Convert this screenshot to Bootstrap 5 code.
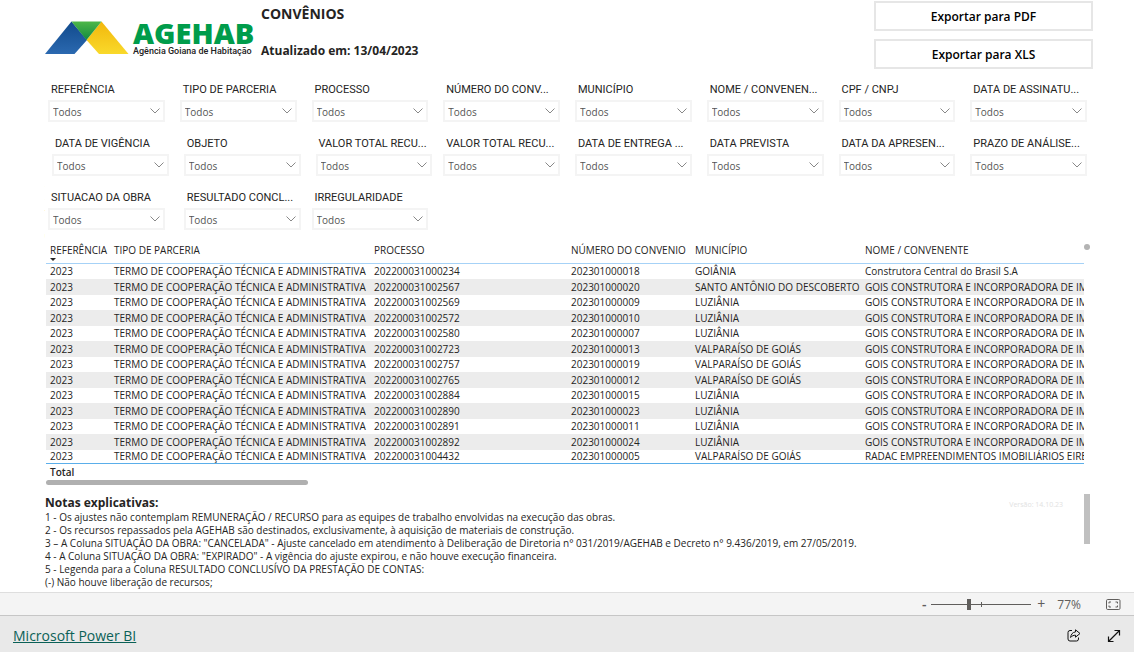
<!DOCTYPE html>
<html lang="pt-BR">
<head>
<meta charset="utf-8">
<meta name="viewport" content="width=device-width, initial-scale=1">
<title>Convênios - AGEHAB</title>
<link href="https://cdn.jsdelivr.net/npm/bootstrap@5.3.0/dist/css/bootstrap.min.css" rel="stylesheet">
<style>
body { font-family: "Open Sans", "Noto Sans", sans-serif; font-size: 10px; line-height: 13px; color: #252423; background: #fff; }
.report-head { padding: 0 41px 0 45px; height: 70px; }
.brand-block { width: 216px; padding-top: 21px; }
.brand-name { font-size: 29px; line-height: 24px; font-weight: 800; color: #009c4b; }
.brand-sub { font-family: Roboto, sans-serif; font-size: 9px; line-height: 12px; font-weight: 500; color: #222; white-space: nowrap; }
.head-title { font-size: 14px; line-height: 16px; font-weight: 700; margin: 0; }
.head-date { font-size: 12px; line-height: 16px; font-weight: 700; margin: 0; }
.head-texts { padding: 6px 0 11px; }
.export-box { width: 219px; gap: 8px; padding-top: 1px; }
.btn-export { border: 2px solid #e6e6e6; border-radius: 0; background: #fff; color: #000; font-size: 12px; line-height: 18px; font-weight: 600; padding: 5px 0 3px; }
.btn-export:hover { background: #f6f6f6; border-color: #ccc; }

.filters { display: grid; grid-template-columns: repeat(8, minmax(0, 1fr)); column-gap: 15px; row-gap: 15px; padding: 13px 47px 0 48px; }
.slicer-indent { margin: 0 -4px 0 4px; }
.filter-label { display: block; font-family: Roboto, sans-serif; font-size: 11px; line-height: 14px; padding-left: 3px; margin-bottom: 3px; white-space: nowrap; }
.filter-select { appearance: none; border: 2px solid #f4f4f4; border-radius: 0; color: #555; font-size: 10px; line-height: 14px; padding: 3px 20px 1px 3px; height: 22px;
  background: #fff url("data:image/svg+xml,%3Csvg xmlns='http://www.w3.org/2000/svg' viewBox='0 0 10 6'%3E%3Cpath d='M.5 .5 5 5 9.5 .5' fill='none' stroke='%23888'/%3E%3C/svg%3E") no-repeat right 3px center / 10px 6px; }

.grid-area { padding: 12px 44px 0 46px; }
.grid-scroll { overflow: hidden; }
.grid-data { width: 100%; table-layout: fixed; border-collapse: collapse; }
.grid-data th, .grid-data td { padding: 0 0 0 4px; white-space: nowrap; overflow: hidden; font-weight: 400; }
.grid-data th { vertical-align: top; height: 21px; line-height: 16px; border-bottom: 1px solid #a6d2f7; }
.grid-data td { height: 15px; line-height: 15px; }
.grid-data tbody tr:nth-child(even) td { height: 16px; line-height: 16px; background: #ececec; }
.grid-data tbody tr:last-child td { height: 13px; line-height: 13px; }
.grid-data tfoot td { font-weight: 600; line-height: 16px; border-top: 1px solid #5aaeea; }
.c-ref { width: 64px; } .c-tipo { width: 260px; } .c-proc { width: 197px; } .c-num { width: 124px; } .c-mun { width: 170px; }
.sort-mark { display: block; width: 0; border: 3px solid transparent; border-top-color: #252423; border-bottom: 0; }
.bar-vert { width: 7px; }
.bar-dot { width: 6px; height: 6px; border-radius: 3px; background: #b3b3b3; margin-top: 2px; }
.bar-horiz { width: 262px; height: 5px; border-radius: 3px; background: #b0b0b0; }

.notes { padding: 9px 44px 0 45px; min-height: 97px; }
.notes h2 { font-size: 12px; line-height: 17px; font-weight: 700; margin: 0; }
.version { font-size: 7px; color: #e2e2e2; margin-right: 21px; }
.notes-thumb { width: 6px; height: 50px; background: #c0c0c0; }

.zoom-bar { height: 24px; background: #f4f4f4; border-top: 1px solid #dedede; border-bottom: 1px solid #c6c6c6; padding-right: 13px; color: #605e5c; }
.zoom-btn { border: 0; background: none; color: #605e5c; padding: 0; width: 8px; font-size: 14px; line-height: 16px; font-weight: 600; }
.zoom-range { appearance: none; width: 100px; height: 13px; margin: 0 6px 0 3px; background: linear-gradient(#605e5c, #605e5c) 50% 50% / 1px 5px no-repeat, linear-gradient(#605e5c, #605e5c) 50% 50% / 100% 1px no-repeat; }
.zoom-range::-webkit-slider-thumb { appearance: none; width: 4px; height: 11px; background: #605e5c; border: 0; border-radius: 0; }
.zoom-range::-moz-range-thumb { width: 4px; height: 11px; background: #605e5c; border: 0; border-radius: 0; }
.zoom-value { font-size: 12px; margin: 0 25px 0 12px; }
.host-bar { height: 36px; background: #e9e9e9; padding: 3px 13px 0; gap: 26px; }
.host-link { font-size: 14px; line-height: 20px; color: #0b6157; }
.icon-btn { border: 0; background: none; padding: 0; display: flex; color: #111; }
</style>
</head>
<body class="d-flex flex-column min-vh-100">
<main class="flex-grow-1">
  <header class="report-head d-flex">
    <div class="brand-block d-flex">
      <svg width="84" height="34" viewBox="0 0 84 34" role="img" aria-label="AGEHAB">
        <defs>
          <linearGradient id="gb" x2="0" y2="1"><stop stop-color="#114a8c"/><stop offset="1" stop-color="#2b69b0"/></linearGradient>
          <linearGradient id="gg" x2="0" y2="1"><stop stop-color="#4db748"/><stop offset="1" stop-color="#128a3e"/></linearGradient>
          <linearGradient id="gy" x2="0" y2="1"><stop stop-color="#f2b70c"/><stop offset="1" stop-color="#f9d92b"/></linearGradient>
        </defs>
        <path d="M0 33 26.500.5 42 19 29.500 33Z" fill="url(#gb)"/>
        <path d="M56.500.5 83.500 33H54L41.500 19Z" fill="url(#gy)"/>
        <path d="M26.500.5H56.500L41.500 19Z" fill="url(#gg)"/>
      </svg>
      <div class="ms-1">
        <div class="brand-name">AGEHAB</div>
        <div class="brand-sub">Agência Goiana de Habitação</div>
      </div>
    </div>
    <div class="head-texts d-flex flex-column justify-content-between flex-grow-1">
      <h1 class="head-title">CONVÊNIOS</h1>
      <p class="head-date">Atualizado em: 13/04/2023</p>
    </div>
    <div class="export-box d-flex flex-column">
      <button type="button" class="btn btn-export">Exportar para PDF</button>
      <button type="button" class="btn btn-export">Exportar para XLS</button>
    </div>
  </header>

  <form class="filters" id="filters"></form>

  <section class="grid-area">
    <div class="d-flex">
      <div class="grid-scroll flex-grow-1">
        <table class="grid-data">
          <colgroup><col class="c-ref"><col class="c-tipo"><col class="c-proc"><col class="c-num"><col class="c-mun"><col></colgroup>
          <thead><tr>
            <th scope="col" aria-sort="descending">REFERÊNCIA<span class="sort-mark"></span></th>
            <th scope="col">TIPO DE PARCERIA</th><th scope="col">PROCESSO</th><th scope="col">NÚMERO DO CONVENIO</th><th scope="col">MUNICÍPIO</th><th scope="col">NOME / CONVENENTE</th>
          </tr></thead>
          <tbody id="rows"></tbody>
          <tfoot><tr><td colspan="6">Total</td></tr></tfoot>
        </table>
      </div>
      <div class="bar-vert"><div class="bar-dot"></div></div>
    </div>
    <div class="bar-horiz"></div>
  </section>

  <section class="notes d-flex">
    <div class="flex-grow-1">
      <h2>Notas explicativas:</h2>
      <ol class="list-unstyled mb-0">
        <li>1 - Os ajustes não contemplam REMUNERAÇÃO / RECURSO para as equipes de trabalho envolvidas na execução das obras.</li>
        <li>2 - Os recursos repassados pela AGEHAB são destinados, exclusivamente, à aquisição de materiais de construção.</li>
        <li>3 – A Coluna SITUAÇÃO DA OBRA: "CANCELADA" - Ajuste cancelado em atendimento à Deliberação de Diretoria n° 031/2019/AGEHAB e Decreto n° 9.436/2019, em 27/05/2019.</li>
        <li>4 - A Coluna SITUAÇÃO DA OBRA: "EXPIRADO" - A vigência do ajuste expirou, e não houve execução financeira.</li>
        <li>5 - Legenda para a Coluna RESULTADO CONCLUSÍVO DA PRESTAÇÃO DE CONTAS:</li>
        <li>(-) Não houve liberação de recursos;</li>
      </ol>
    </div>
    <div class="version pt-1">Versão: 14.10.23</div>
    <div class="notes-thumb"></div>
  </section>
</main>

<div class="zoom-bar d-flex align-items-center justify-content-end">
  <button type="button" class="zoom-btn" aria-label="Reduzir">-</button>
  <input type="range" class="zoom-range" min="0" max="100" value="37" aria-label="Zoom">
  <button type="button" class="zoom-btn fw-normal" aria-label="Ampliar">+</button>
  <span class="zoom-value">77%</span>
  <button type="button" class="icon-btn" aria-label="Ajustar à página">
    <svg width="15" height="11" viewBox="0 0 15 11" fill="none" stroke="#605e5c"><rect x=".5" y=".5" width="13.500" height="10" rx="1.200"/><path d="M3 4.500V3h2M9.500 3h2v1.500M3 6.500V8h2M9.500 8h2V6.500"/></svg>
  </button>
</div>
<footer class="host-bar d-flex align-items-center">
  <a class="host-link me-auto" href="#">Microsoft Power BI</a>
  <button type="button" class="icon-btn" aria-label="Compartilhar">
    <svg width="14" height="13" viewBox="0 0 14 13" fill="none" stroke="currentColor" stroke-linejoin="round"><path d="M5 1.500H3A2 2 0 0 0 1 3.500V10a2 2 0 0 0 2 2h6.500a2 2 0 0 0 2-2V8.500"/><path d="M8.500.8 13 4.500 8.500 8.200V6.200C6.500 6.200 5 6.800 3.600 8.500 3.900 5.500 5.500 3.200 8.500 2.900Z"/></svg>
  </button>
  <button type="button" class="icon-btn" aria-label="Tela inteira">
    <svg width="14" height="14" viewBox="0 0 14 14" fill="none" stroke="currentColor" stroke-width="1.200"><path d="M1.500 12.500l11-11M7.500 1.500h5v5M1.500 7.500v5h5"/></svg>
  </button>
</footer>

<script>
// Each entry is [label, indented]; some slicers are indented by one spacing step.
const filters = [
  ["REFERÊNCIA"], ["TIPO DE PARCERIA"], ["PROCESSO"], ["NÚMERO DO CONV..."], ["MUNICÍPIO"], ["NOME / CONVENEN..."], ["CPF / CNPJ"], ["DATA DE ASSINATU..."],
  ["DATA DE VIGÊNCIA", 1], ["OBJETO", 1], ["VALOR TOTAL RECU...", 1], ["VALOR TOTAL RECU..."], ["DATA DE ENTREGA ..."], ["DATA PREVISTA"], ["DATA DA APRESEN..."], ["PRAZO DE ANÁLISE..."],
  ["SITUACAO DA OBRA"], ["RESULTADO CONCL...", 1], ["IRREGULARIDADE"]
];
document.getElementById("filters").innerHTML = filters.map(([label, indent], i) =>
  `<div class="${indent ? "slicer-indent" : ""}"><label class="filter-label" for="f${i}">${label}</label>
   <select class="filter-select w-100 d-block" id="f${i}"><option>Todos</option></select></div>`).join("");

const gois = "GOIS CONSTRUTORA E INCORPORADORA DE IMOVEIS";
const rows = [
  ["202200031000234", "202301000018", "GOIÂNIA", "Construtora Central do Brasil S.A"],
  ["202200031002567", "202301000020", "SANTO ANTÔNIO DO DESCOBERTO", gois],
  ["202200031002569", "202301000009", "LUZIÂNIA", gois],
  ["202200031002572", "202301000010", "LUZIÂNIA", gois],
  ["202200031002580", "202301000007", "LUZIÂNIA", gois],
  ["202200031002723", "202301000013", "VALPARAÍSO DE GOIÁS", gois],
  ["202200031002757", "202301000019", "VALPARAÍSO DE GOIÁS", gois],
  ["202200031002765", "202301000012", "VALPARAÍSO DE GOIÁS", gois],
  ["202200031002884", "202301000015", "LUZIÂNIA", gois],
  ["202200031002890", "202301000023", "LUZIÂNIA", gois],
  ["202200031002891", "202301000011", "LUZIÂNIA", gois],
  ["202200031002892", "202301000024", "LUZIÂNIA", gois],
  ["202200031004432", "202301000005", "VALPARAÍSO DE GOIÁS", "RADAC EMPREENDIMENTOS IMOBILIÁRIOS EIRELI"]
];
document.getElementById("rows").innerHTML = rows.map(r =>
  "<tr>" + ["2023", "TERMO DE COOPERAÇÃO TÉCNICA E ADMINISTRATIVA", ...r].map(t => `<td>${t}</td>`).join("") + "</tr>").join("");
</script>
<script src="https://cdn.jsdelivr.net/npm/bootstrap@5.3.0/dist/js/bootstrap.bundle.min.js"></script>
</body>
</html>
